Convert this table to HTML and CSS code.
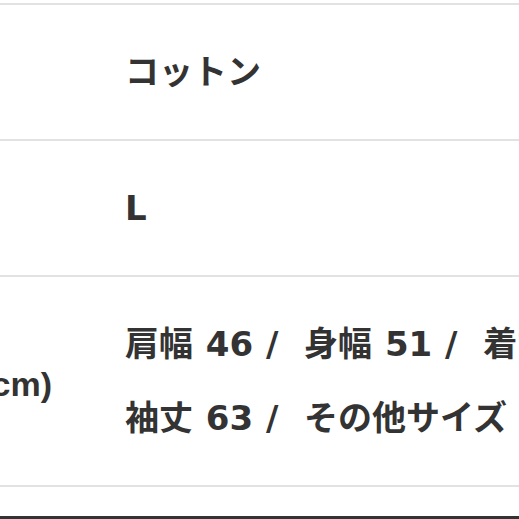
FILE: index.html
```html
<!DOCTYPE html>
<html lang="ja">
<head>
<meta charset="utf-8">
<link rel="stylesheet" href="styles.css">
</head>
<body>
<div class="spec">
  <div class="row">
    <div class="label"></div>
    <div class="value"><p class="line">コットン</p></div>
  </div>
  <div class="row">
    <div class="label"></div>
    <div class="value"><p class="line">L</p></div>
  </div>
  <div class="row">
    <div class="label"><span>実寸(cm)</span></div>
    <div class="value">
      <p class="line">肩幅 46 /&nbsp; 身幅 51 /&nbsp; 着丈 70 /</p>
      <p class="line">袖丈 63 /&nbsp; その他サイズ</p>
    </div>
  </div>
</div>
<div class="footer"></div>
</body>
</html>
```

FILE: styles.css
```css
html, body {
  margin: 0;
  padding: 0;
  background: #ffffff;
}

body {
  width: 519px;
  height: 519px;
  overflow: hidden;
  display: flex;
  flex-direction: column;
  font-family: "DejaVu Sans", "Noto Sans CJK JP", sans-serif;
  font-weight: bold;
  color: #333333;
}

.spec {
  padding-top: 3px;
}

.row {
  display: flex;
  border-top: 2px solid #e2e2e2;
}

.row:last-child {
  border-bottom: 2px solid #e2e2e2;
}

.label {
  width: 125px;
  flex: none;
  overflow: hidden;
  display: flex;
  align-items: center;
  justify-content: flex-end;
  padding-right: 73px;
  box-sizing: border-box;
  font-family: "Liberation Sans", "Noto Sans CJK JP", sans-serif;
  font-size: 34px;
  white-space: nowrap;
}

.value {
  flex: 1;
  min-width: 0;
  padding: 30px 0;
  overflow: hidden;
}

.line {
  margin: 0;
  font-size: 34px;
  line-height: 74px;
  white-space: nowrap;
  word-spacing: 1px;
}

.footer {
  margin-top: auto;
  height: 3px;
  background: #333333;
}
```
